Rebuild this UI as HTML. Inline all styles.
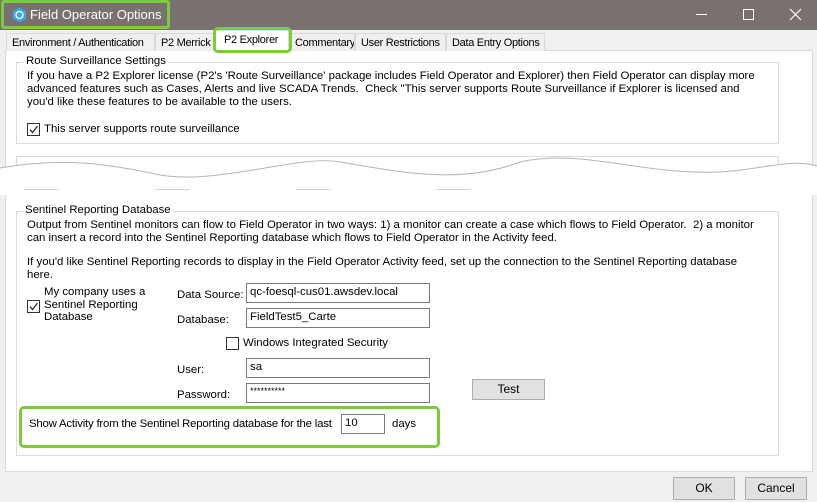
<!DOCTYPE html>
<html><head><meta charset="utf-8"><style>
*{margin:0;padding:0;box-sizing:border-box}
body{width:817px;height:502px;overflow:hidden;background:#f0f0f0;font-family:"Liberation Sans",sans-serif;font-size:11.4px;color:#000;position:relative}
.a{position:absolute;white-space:nowrap}
.title{left:0;top:0;width:817px;height:30px;background:#79716f}
.tab{position:absolute;top:33px;height:18px;border:1px solid #d9d9d9;border-bottom:none;background:#f0f0f0;padding:3px 0 0 5px;font-size:11px;letter-spacing:-0.3px;white-space:nowrap;overflow:hidden}
.panel{left:5px;top:50px;width:808px;height:422px;background:#fff;border:1px solid #d9d9d9}
.grp{position:absolute;border:1px solid #dcdcdc}
.inp{position:absolute;height:20px;border:1px solid #7a7a7a;background:#fff;padding:2px 3px;font-size:11.4px;white-space:nowrap}
.cb{position:absolute;width:13px;height:13px;border:1px solid #333;background:#fff}
.btn{position:absolute;border:1px solid #adadad;background:#e1e1e1;text-align:center;font-size:12px}
.hl{position:absolute;border:3px solid #7ccb3a;border-radius:5px}
</style></head><body>
<div class="a title"></div>
<div class="a" style="left:1px;top:0;width:169px;height:29px;border:3px solid #7ccb3a;border-radius:3px"></div>
<svg class="a" style="left:12px;top:7px" width="15" height="16" viewBox="0 0 15 16"><path d="M7.5 0.5 L14 4 L14 12 L7.5 15.5 L1 12 L1 4Z" fill="#3ba7e5"/><circle cx="7.5" cy="8" r="3.5" fill="none" stroke="#fff" stroke-width="1.3"/></svg>
<div class="a" style="left:30px;top:7px;color:#fff;font-size:13px">Field Operator Options</div>
<div class="a" style="left:696px;top:14px;width:11px;height:1px;background:#fff"></div>
<div class="a" style="left:743px;top:9px;width:11px;height:11px;border:1px solid #fff"></div>
<svg class="a" style="left:789px;top:8px" width="13" height="13"><path d="M1 1L12 12M12 1L1 12" stroke="#fff" stroke-width="1.2"/></svg>

<div class="a panel"></div>
<div class="tab" style="left:6px;width:149px">Environment / Authentication</div>
<div class="tab" style="left:155px;width:59px">P2 Merrick</div>
<div class="tab" style="left:289px;width:66px">Commentary</div>
<div class="tab" style="left:355px;width:91px">User Restrictions</div>
<div class="tab" style="left:446px;width:99px">Data Entry Options</div>
<div class="tab" style="left:214px;top:30px;height:21px;width:75px;background:#fff;padding-top:3px;padding-left:9px">P2 Explorer</div>
<div class="hl" style="left:213px;top:27px;width:79px;height:26px"></div>

<div class="grp" style="left:16px;top:62px;width:763px;height:82px"></div>
<div class="a" style="left:24px;top:55px;background:#fff;padding:0 2px">Route Surveillance Settings</div>
<div class="a" style="left:27px;top:70px;line-height:13px">If you have a P2 Explorer license (P2's 'Route Surveillance' package includes Field Operator and Explorer) then Field Operator can display more<br>advanced features such as Cases, Alerts and live SCADA Trends.&nbsp; Check "This server supports Route Surveillance if Explorer is licensed and<br>you'd like these features to be available to the users.</div>
<div class="cb" style="left:27px;top:123px"></div><svg class="a" style="left:27px;top:123px" width="13" height="13"><path d="M3 6.5L5.5 9.5L10.5 3" fill="none" stroke="#222" stroke-width="1.2"/></svg>
<div class="a" style="left:44px;top:123px">This server supports route surveillance</div>
<div class="grp" style="left:16px;top:156px;width:763px;height:20px;border-bottom:none"></div>

<svg class="a" style="left:0;top:150px" width="817" height="45"><path d="M0 18 C60 8 100 12 160 25 C220 35 300 4 340 12 C400 22 460 35 520 12 C580 -2 640 25 720 22 C760 20 790 8 817 16 L817 45 L0 45Z" fill="#fff"/><path d="M0 18 C60 8 100 12 160 25 C220 35 300 4 340 12 C400 22 460 35 520 12 C580 -2 640 25 720 22 C760 20 790 8 817 16" fill="none" stroke="#b5b5b5" stroke-width="1"/></svg>
<div class="a" style="left:5px;top:190px;width:808px;height:1px;background:#fff"></div>
<div class="a" style="left:24px;top:189px;width:35px;height:1px;background:#d5d5d5"></div>
<div class="a" style="left:155px;top:189px;width:35px;height:1px;background:#d5d5d5"></div>
<div class="a" style="left:296px;top:189px;width:35px;height:1px;background:#d5d5d5"></div>
<div class="a" style="left:436px;top:189px;width:35px;height:1px;background:#d5d5d5"></div>

<div class="grp" style="left:16px;top:211px;width:763px;height:245px"></div>
<div class="a" style="left:23px;top:204px;background:#fff;padding:0 2px">Sentinel Reporting Database</div>
<div class="a" style="left:27px;top:219px;line-height:13px">Output from Sentinel monitors can flow to Field Operator in two ways: 1) a monitor can create a case which flows to Field Operator.&nbsp; 2) a monitor<br>can insert a record into the Sentinel Reporting database which flows to Field Operator in the Activity feed.</div>
<div class="a" style="left:27px;top:256px;line-height:13px">If you'd like Sentinel Reporting records to display in the Field Operator Activity feed, set up the connection to the Sentinel Reporting database<br>here.</div>
<div class="cb" style="left:27px;top:300px"></div><svg class="a" style="left:27px;top:300px" width="13" height="13"><path d="M3 6.5L5.5 9.5L10.5 3" fill="none" stroke="#222" stroke-width="1.2"/></svg>
<div class="a" style="left:44px;top:286px;line-height:12.5px">My company uses a<br>Sentinel Reporting<br>Database</div>
<div class="a" style="left:177px;top:289px">Data Source:</div>
<div class="inp" style="left:246px;top:283px;width:184px">qc-foesql-cus01.awsdev.local</div>
<div class="a" style="left:177px;top:314px">Database:</div>
<div class="inp" style="left:246px;top:308px;width:184px">FieldTest5_Carte</div>
<div class="cb" style="left:226px;top:337px"></div>
<div class="a" style="left:243px;top:337px">Windows Integrated Security</div>
<div class="a" style="left:177px;top:364px">User:</div>
<div class="inp" style="left:246px;top:358px;width:184px">sa</div>
<div class="a" style="left:177px;top:389px">Password:</div>
<div class="inp" style="left:246px;top:383px;width:184px;font-size:9px">**********</div>
<div class="btn" style="left:472px;top:379px;width:73px;height:21px;line-height:19px">Test</div>
<div class="hl" style="left:19px;top:406px;width:421px;height:42px"></div>
<div class="a" style="left:29px;top:418px;letter-spacing:-0.2px">Show Activity from the Sentinel Reporting database for the last</div>
<div class="inp" style="left:341px;top:414px;width:44px">10</div>
<div class="a" style="left:392px;top:418px">days</div>

<div class="btn" style="left:673px;top:477px;width:62px;height:23px;line-height:21px">OK</div>
<div class="btn" style="left:745px;top:477px;width:62px;height:23px;line-height:21px">Cancel</div>
</body></html>
